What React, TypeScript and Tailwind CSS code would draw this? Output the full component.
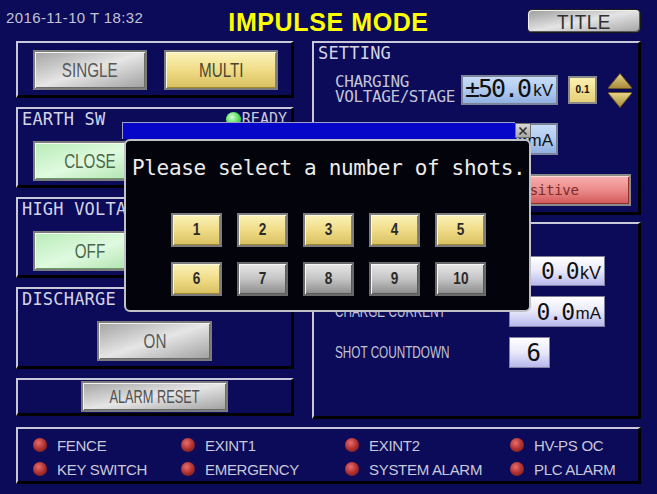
import React from "react";

const mono = "font-['DejaVu_Sans_Mono','Liberation_Mono',monospace]";
const sans = "font-['Liberation_Sans',Arial,sans-serif]";

const panel =
  "border-t-2 border-l-2 border-r-[3px] border-b-[3px] border-t-[#c8c8d8] border-l-[#c8c8d8] border-r-black border-b-black";

const silverBtn =
  "border-2 border-[#7c7c7c] bg-linear-to-br from-[#a4a4a4] via-[#e6e6e6] to-[#a0a0a0] shadow-[inset_1px_1px_0_#f4f4f4,inset_-1px_-1px_0_#6a6a6a]";
const yellowBtn =
  "border-2 border-[#7c7c7c] bg-linear-to-b from-[#fbf3b8] via-[#f0dc88] to-[#d8c060] shadow-[inset_1px_1px_0_#fffbe0,inset_-1px_-1px_0_#a08830]";
const greenBtn =
  "border-2 border-[#7c7c7c] bg-linear-to-br from-[#b8ecb8] via-[#e0fae0] to-[#a8e0a8] shadow-[inset_1px_1px_0_#f4fff4,inset_-1px_-1px_0_#6a9a6a]";
const graySmall =
  "border-2 border-[#6a6a6a] bg-linear-to-b from-[#e8e8e8] via-[#c4c4c4] to-[#8c8c8c] shadow-[inset_1px_1px_0_#f8f8f8,inset_-1px_-1px_0_#5a5a5a]";

function Led({ color }: { color: "red" | "green" }) {
  return (
    <div
      className={
        color === "red"
          ? "w-[14px] h-[14px] rounded-full shrink-0 bg-[radial-gradient(circle_at_40%_35%,#e87070_0%,#b03030_50%,#5a1414_100%)]"
          : "w-[15px] h-[15px] rounded-full shrink-0 bg-[radial-gradient(circle_at_40%_35%,#d8ffd8_0%,#58e058_50%,#2a9a2a_100%)]"
      }
    />
  );
}

function BtnText({ children, className = "" }: { children: React.ReactNode; className?: string }) {
  return (
    <span className={`${sans} inline-block scale-x-[0.76] text-[20px] leading-none whitespace-nowrap ${className}`}>
      {children}
    </span>
  );
}

function Label({ children }: { children: React.ReactNode }) {
  return <div className={`${mono} text-[17px] leading-[20px] text-[#d4d4e4] tracking-[0.2px]`}>{children}</div>;
}

function Arrows() {
  return (
    <svg width="26" height="37" viewBox="0 0 26 37">
      <defs>
        <linearGradient id="gu" x1="0" y1="0" x2="0" y2="1">
          <stop offset="0" stopColor="#e6d488" />
          <stop offset="1" stopColor="#a88a38" />
        </linearGradient>
      </defs>
      <path d="M13 1.5 L24.5 15.5 Q25 16.5 24 16.5 L2 16.5 Q1 16.5 1.5 15.5 Z" fill="url(#gu)" stroke="#6a5420" strokeWidth="1" strokeLinejoin="round" />
      <path d="M2 20.5 L24 20.5 Q25 20.5 24.5 21.5 L13 35.5 L1.5 21.5 Q1 20.5 2 20.5 Z" fill="url(#gu)" stroke="#6a5420" strokeWidth="1" strokeLinejoin="round" />
    </svg>
  );
}

const statusItems = [
  ["FENCE", "EXINT1", "EXINT2", "HV-PS OC"],
  ["KEY SWITCH", "EMERGENCY", "SYSTEM ALARM", "PLC ALARM"],
];

export default function App() {
  return (
    <div className="w-[657px] h-[494px] bg-[#0b0b5a] overflow-hidden relative select-none">
      {/* Header */}
      <div className="h-[41px] grid grid-cols-[1fr_auto_1fr] items-start">
        <div className={`${sans} pl-[6px] pt-[10px] text-[15px] leading-none tracking-[0.4px] text-[#c4c4d4]`}>2016-11-10 T 18:32</div>
        <div className={`${sans} pt-[10px] text-[25px] leading-none font-bold tracking-[0.6px] text-[#ffff00]`}>IMPULSE MODE</div>
        <div className="justify-self-end mr-[16px] mt-[9px] w-[114px] h-[24px] rounded-[5px] border border-[#1a1a1a] bg-linear-to-br from-[#9c9c9c] via-[#e4e4e4] to-[#a4a4a4] shadow-[inset_1px_1px_0_#f0f0f0,inset_-1px_-1px_0_#5a5a5a] flex items-center justify-center">
          <span className={`${sans} inline-block scale-x-[0.9] text-[21px] leading-none tracking-[0.5px] text-[#303030]`}>TITLE</span>
        </div>
      </div>

      {/* Body */}
      <div className="flex px-[16px] gap-[18px]">
        {/* Left column */}
        <div className="w-[278px] flex flex-col gap-[9px]">
          <div className={`${panel} h-[57px] flex gap-[17px] pl-[15px] pt-[7px]`}>
            <div className={`${silverBtn} w-[114px] h-[40px] flex items-center justify-center`}>
              <BtnText className="text-[#585858]">SINGLE</BtnText>
            </div>
            <div className={`${yellowBtn} w-[114px] h-[40px] flex items-center justify-center`}>
              <BtnText className="text-[#4a4630]">MULTI</BtnText>
            </div>
          </div>

          <div className={`${panel} h-[81px] flex flex-col`}>
            <div className="h-[20px] flex justify-between pl-[4px] pr-[4px]">
              <Label>EARTH SW</Label>
              <div className="flex items-center gap-[1px]">
                <Led color="green" />
                <span className={`${mono} text-[15px] leading-[20px] text-[#c8c8d8]`}>READY</span>
              </div>
            </div>
            <div className={`${greenBtn} ml-[15px] mt-[12px] w-[114px] h-[40px] flex items-center justify-center`}>
              <BtnText className="text-[#4a684a]">CLOSE</BtnText>
            </div>
          </div>

          <div className={`${panel} h-[81px] flex flex-col`}>
            <div className="h-[20px] pl-[4px]">
              <Label>HIGH VOLTAGE</Label>
            </div>
            <div className={`${greenBtn} ml-[15px] mt-[12px] w-[114px] h-[40px] flex items-center justify-center`}>
              <BtnText className="text-[#4a684a]">OFF</BtnText>
            </div>
          </div>

          <div className={`${panel} h-[82px] flex flex-col`}>
            <div className="h-[20px] pl-[4px]">
              <Label>DISCHARGE</Label>
            </div>
            <div className={`${silverBtn} self-center mt-[12px] w-[115px] h-[40px] flex items-center justify-center`}>
              <BtnText className="text-[#585858]">ON</BtnText>
            </div>
          </div>

          <div className={`${panel} h-[38px] flex items-center justify-center`}>
            <div className={`${silverBtn} w-[147px] h-[31px] flex items-center justify-center`}>
              <span className={`${sans} inline-block scale-x-[0.71] text-[18px] leading-none whitespace-nowrap text-[#505050]`}>ALARM RESET</span>
            </div>
          </div>
        </div>

        {/* Right column */}
        <div className="w-[329px] flex flex-col gap-[7px]">
          <div className={`${panel} h-[174px] flex flex-col`}>
            <div className="h-[20px] pl-[4px]">
              <Label>SETTING</Label>
            </div>
            {/* Row 1 */}
            <div className="mt-[9px] h-[36px] flex items-center pl-[21px]">
              <div className={`${mono} w-[126px] self-start mt-[2px] text-[16px] leading-[15px] tracking-[-0.4px] text-[#c4c4d4] whitespace-pre-line`}>
                {"CHARGING\nVOLTAGE/STAGE"}
              </div>
              <div className="w-[97px] h-[30px] border-2 border-[#7c8498] bg-linear-to-b from-[#c8dcf8] via-[#b0cbf0] to-[#90b0e0] flex items-end justify-end pr-[3px] pb-[1px]">
                <span className={`${mono} text-[25px] leading-[27px] tracking-[-2px] text-[#101010]`}>±50.0</span>
                <span className={`${sans} text-[17px] leading-[22px] ml-[3px] text-[#101010]`}>kV</span>
              </div>
              <div className="ml-[10px] w-[29px] h-[28px] border-2 border-[#8a8a8a] bg-linear-to-b from-[#fbf2b0] to-[#e6cf78] flex items-center justify-center">
                <span className={`${sans} text-[10px] font-bold leading-none text-[#101010]`}>0.1</span>
              </div>
              <div className="ml-[10px]">
                <Arrows />
              </div>
            </div>
            {/* Row 2 */}
            <div className="mt-[15px] h-[32px] flex items-center pl-[147px]">
              <div className="w-[97px] h-[32px] border-2 border-[#7c8498] bg-linear-to-b from-[#c8dcf8] via-[#b0cbf0] to-[#90b0e0] flex items-end justify-end pr-[3px] pb-[1px]">
                <span className={`${mono} text-[25px] leading-[27px] tracking-[-2px] text-[#101010]`}>1.0</span>
                <span className={`${sans} text-[17px] leading-[22px] ml-[2px] text-[#101010]`}>mA</span>
              </div>
            </div>
            {/* Row 3 */}
            <div className="mt-[19px] h-[32px] flex items-center pl-[147px]">
              <div className="w-[170px] h-[32px] border-2 border-[#8a8a8a] bg-linear-to-b from-[#f8b0b0] via-[#ec8a8a] to-[#d05858] shadow-[inset_1px_1px_0_#ffd8d8,inset_-1px_-1px_0_#903030] flex items-center justify-center">
                <span className={`${mono} text-[14px] leading-none tracking-[-0.3px] text-[#7a2c2c]`}>Positive</span>
              </div>
            </div>
          </div>

          <div className={`${panel} h-[197px] flex flex-col`}>
            <div className="h-[20px]" />
            <div className="mt-[12px] h-[30px] flex items-center pl-[195px]">
              <div className="w-[96px] h-[30px] border border-[#8080a0] bg-linear-to-b from-[#ffffff] via-[#e8e8fa] to-[#b8b8ec] flex items-end justify-end pr-[3px]">
                <span className={`${mono} text-[23px] leading-[27px] tracking-[-1.5px] text-[#101010]`}>0.0</span>
                <span className={`${sans} text-[18px] leading-[23px] ml-[2px] text-[#101010]`}>kV</span>
              </div>
            </div>
            <div className="mt-[10px] h-[31px] flex items-center pl-[21px]">
              <div className="w-[174px] leading-none">
                <span className={`${sans} inline-block origin-left scale-x-[0.69] text-[17px] leading-none whitespace-nowrap text-[#c4c4d4]`}>CHARGE CURRENT</span>
              </div>
              <div className="w-[96px] h-[31px] border border-[#8080a0] bg-linear-to-b from-[#ffffff] via-[#e8e8fa] to-[#b8b8ec] flex items-end justify-end pr-[3px]">
                <span className={`${mono} text-[23px] leading-[28px] tracking-[-1.5px] text-[#101010]`}>0.0</span>
                <span className={`${sans} text-[17px] leading-[24px] ml-[2px] text-[#101010]`}>mA</span>
              </div>
            </div>
            <div className="mt-[10px] h-[31px] flex items-center pl-[21px]">
              <div className="w-[174px] leading-none">
                <span className={`${sans} inline-block origin-left scale-x-[0.69] text-[17px] leading-none whitespace-nowrap text-[#c4c4d4]`}>SHOT COUNTDOWN</span>
              </div>
              <div className="w-[41px] h-[31px] border border-[#8080a0] bg-linear-to-b from-[#ffffff] via-[#e8e8fa] to-[#b8b8ec] flex items-center justify-end pr-[8px]">
                <span className={`${mono} text-[24px] leading-none text-[#101010]`}>6</span>
              </div>
            </div>
          </div>
        </div>
      </div>

      {/* Status panel */}
      <div className={`${panel} mt-[8px] ml-[16px] w-[625px] h-[57px] pt-[4px] pl-[15px]`}>
        {statusItems.map((row, i) => (
          <div key={i} className="h-[24px] grid grid-cols-[148px_164px_165px_1fr] items-center">
            {row.map((t) => (
              <div key={t} className="flex items-center gap-[10px]">
                <Led color="red" />
                <span className={`${sans} text-[15px] leading-none text-[#c8c8d8] tracking-[-0.3px]`}>{t}</span>
              </div>
            ))}
          </div>
        ))}
      </div>

      {/* Modal */}
      <div className="absolute left-[122px] top-[122px] w-[409px] h-[190px]">
        <div className="flex">
          <div className="w-[393px] h-[17px] bg-[#0606c8] border-t border-l border-t-[#a0a0c8] border-l-[#a0a0c8]" />
          <div className="w-[16px] h-[15px] mt-[1px] bg-linear-to-b from-[#d8d8d8] to-[#a8a8a8] border border-[#707070] flex items-center justify-center">
            <svg width="10" height="10" viewBox="0 0 10 10">
              <path d="M1.5 1.5 L8.5 8.5 M8.5 1.5 L1.5 8.5" stroke="#303030" strokeWidth="1.6" />
            </svg>
          </div>
        </div>
        <div className="absolute left-[2px] top-[17px] w-[407px] h-[173px] rounded-[6px] border-2 border-[#c0c0c8] bg-[#03030c] pl-[6px] pt-[14px]">
          <div className={`${mono} text-[21px] leading-[26px] tracking-[-0.35px] text-[#ececec] whitespace-nowrap`}>
            Please select a number of shots.
          </div>
          <div className="mt-[32px] ml-[39px] flex flex-col gap-[15px]">
            {[
              [1, 2, 3, 4, 5],
              [6, 7, 8, 9, 10],
            ].map((row, i) => (
              <div key={i} className="flex gap-[15px]">
                {row.map((n) => (
                  <div
                    key={n}
                    className={`${n <= 6 ? yellowBtn : graySmall} w-[51px] h-[34px] flex items-center justify-center`}
                  >
                    <span className={`${sans} inline-block scale-x-[0.85] text-[16px] font-bold leading-none text-[#2a2a2a]`}>{n}</span>
                  </div>
                ))}
              </div>
            ))}
          </div>
        </div>
      </div>
    </div>
  );
}
